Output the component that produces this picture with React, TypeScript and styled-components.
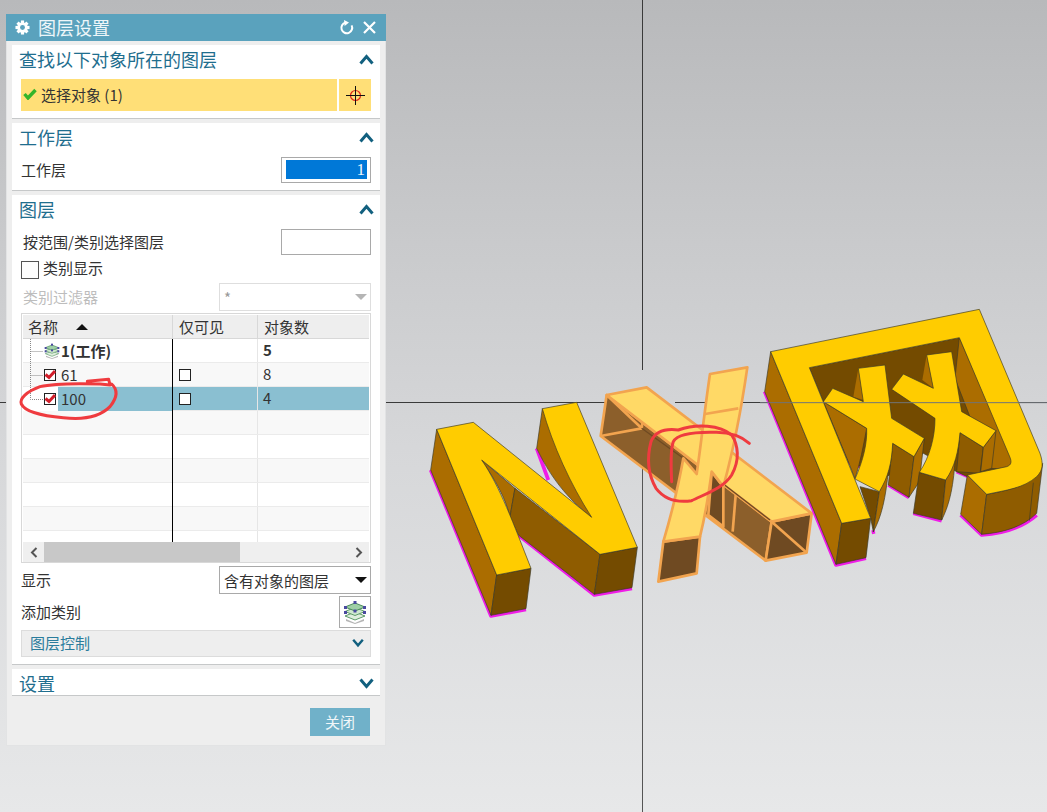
import React from "react";
import styled, { createGlobalStyle } from "styled-components";

const Global = createGlobalStyle`
  html, body { margin: 0; padding: 0; background: #d0d1d3; }
  * { box-sizing: border-box; }
`;

const FONT = `"Noto Sans CJK SC", "Noto Sans", "Liberation Sans", sans-serif`;

const Viewport = styled.div`
  position: relative;
  width: 1047px;
  height: 812px;
  overflow: hidden;
  font-family: ${FONT};
  background: linear-gradient(180deg, #b8b9bb 0%, #c9cacc 30%, #d6d7d9 55%, #e7e8e9 100%);
`;

const Scene = styled.svg`
  position: absolute;
  inset: 0;
  width: 1047px;
  height: 812px;
  display: block;
`;

const Overlay = styled(Scene)`
  pointer-events: none;
  z-index: 3;
`;

const Dialog = styled.div`
  position: absolute;
  left: 6px;
  top: 14px;
  width: 380px;
  height: 732px;
  z-index: 2;
  background: #eeeeee;
  border: 1px solid #e2e3e4;
  border-top: none;
  display: flex;
  flex-direction: column;
`;

const TitleBar = styled.div`
  height: 27px;
  margin: 0 -1px;
  background: #5aa2bd;
  color: #fff;
  display: flex;
  align-items: center;
  padding: 0 10px 0 9px;
  flex-shrink: 0;
`;

const TitleText = styled.span`
  font-size: 18px;
  line-height: 27px;
  margin-left: 8px;
  flex: 1;
  color: #eef6f9;
`;

const TitleIcons = styled.div`
  display: flex;
  align-items: center;
  gap: 9px;
`;

const Cards = styled.div`
  display: flex;
  flex-direction: column;
  gap: 4px;
  padding: 4px 5px 0;
  flex: 1;
`;

const Card = styled.section<{ $h: number }>`
  height: ${(p) => p.$h}px;
  background: #fff;
  border-bottom: 1px solid #c6c8c9;
  padding: 0 9px 0 8px;
  display: flex;
  flex-direction: column;
`;

const SectionHead = styled.div`
  height: 30px;
  display: flex;
  align-items: center;
  justify-content: space-between;
  padding-bottom: 2px;
  margin-right: -3px;
  flex-shrink: 0;
`;

const SectionTitle = styled.h2`
  margin: 0 0 0 -1px;
  font-size: 18px;
  font-weight: 400;
  line-height: 28px;
  color: #1f6e8e;
`;

const Selector = styled.div`
  display: flex;
  gap: 2px;
  height: 32px;
  margin: 4px 0 0 1px;
`;

const SelectorMain = styled.div`
  flex: 1;
  background: #ffdf77;
  display: flex;
  align-items: center;
  gap: 4px;
  padding: 0 0 2px 2px;
  font-size: 15px;
  color: #333;
`;

const SelectorPick = styled.div`
  width: 32px;
  background: #ffdf77;
  display: flex;
  align-items: center;
  justify-content: center;
`;

const FieldRow = styled.div<{ $h: number; $mt?: number; $pl?: number }>`
  height: ${(p) => p.$h}px;
  margin-top: ${(p) => p.$mt ?? 0}px;
  padding-left: ${(p) => p.$pl ?? 1}px;
  display: flex;
  align-items: center;
  justify-content: space-between;
  font-size: 15px;
  color: #333;
  flex-shrink: 0;
`;

const FieldLabel = styled.span<{ $muted?: boolean }>`
  margin-bottom: 2px;
  color: ${(p) => (p.$muted ? "#bdbdbd" : "#333")};
`;

const NumberBox = styled.div`
  width: 90px;
  height: 26px;
  border: 1px solid #a9a9a9;
  padding: 2px 3px 3px 4px;
`;

const NumberFill = styled.div`
  height: 100%;
  background: #0078d7;
  color: #f1f6fb;
  text-align: right;
  padding-right: 2px;
  font: 17px/19px "Liberation Serif", serif;
`;

const EmptyBox = styled.div`
  width: 90px;
  height: 26px;
  border: 1px solid #a9a9a9;
  background: #fff;
`;

const CheckLine = styled.label`
  height: 19px;
  margin-top: 5px;
  display: flex;
  align-items: center;
  gap: 4px;
  font-size: 15px;
  color: #333;
  margin-left: 1px;
`;

const CheckText = styled.span`
  margin-bottom: 4px;
`;

const CheckSquare = styled.span`
  width: 18px;
  height: 18px;
  border: 1px solid #555;
  background: #fff;
`;

const Combo = styled.div<{ $disabled?: boolean }>`
  width: 152px;
  height: 28px;
  border: 1px solid ${(p) => (p.$disabled ? "#dedede" : "#a9a9a9")};
  padding: 0 3px 0 4px;
  display: flex;
  align-items: center;
  justify-content: space-between;
  font-size: 15px;
  color: ${(p) => (p.$disabled ? "#999" : "#333")};
`;

const Table = styled.div`
  height: 250px;
  margin: 2px 0 0 1px;
  border: 1px solid #d8d8d8;
  padding: 1px;
  display: flex;
  flex-direction: column;
  flex-shrink: 0;
`;

const HeadRow = styled.div`
  display: grid;
  grid-template-columns: 150px 85px 1fr;
  height: 24px;
  flex-shrink: 0;
  background: #eeeeee;
  border-bottom: 1px solid #d8d8d8;
  font-size: 15px;
  color: #333;
`;

const HeadCell = styled.div<{ $pl: number; $line?: boolean }>`
  padding-left: ${(p) => p.$pl}px;
  line-height: 23px;
  display: flex;
  align-items: center;
  gap: 18px;
  border-right: ${(p) => (p.$line ? "1px solid #d8d8d8" : "none")};
`;

const Rows = styled.div`
  height: 203px;
  overflow: hidden;
  flex-shrink: 0;
`;

const Row = styled.div<{ $stripe: boolean }>`
  display: grid;
  grid-template-columns: 150px 85px 1fr;
  height: 24px;
  background: ${(p) => (p.$stripe ? "#f8f8f8" : "#fff")};
  border-bottom: 1px solid #ebebeb;
  font-size: 15px;
  color: #333;
`;

const NameCell = styled.div<{ $selected?: boolean }>`
  border-right: 1px solid #000;
  margin-bottom: -1px;
  padding-left: 5px;
  display: flex;
  align-items: center;
  background: ${(p) =>
    p.$selected ? "linear-gradient(90deg, #fff 0, #fff 35px, #8abfd1 35px)" : "none"};
`;

const TreeIcon = styled.span`
  display: flex;
  width: 33px;
  flex-shrink: 0;
  align-items: center;
`;

const CellText = styled.span<{ $bold?: boolean }>`
  font-weight: ${(p) => (p.$bold ? 700 : 400)};
  margin-bottom: 2px;
`;

const MidCell = styled.div<{ $selected?: boolean }>`
  border-right: 1px solid #e6e6e6;
  padding-left: 6px;
  display: flex;
  align-items: center;
  background: ${(p) => (p.$selected ? "#8abfd1" : "none")};
`;

const SmallBox = styled.span`
  width: 12px;
  height: 12px;
  border: 1px solid #222;
  background: #fff;
`;

const CountCell = styled.div<{ $selected?: boolean; $bold?: boolean }>`
  padding: 0 0 2px 5px;
  display: flex;
  align-items: center;
  font-weight: ${(p) => (p.$bold ? 700 : 400)};
  background: ${(p) => (p.$selected ? "#8abfd1" : "none")};
`;

const ScrollBar = styled.div`
  height: 20px;
  background: #efefef;
  display: flex;
  align-items: center;
  flex-shrink: 0;
`;

const ScrollBtn = styled.div`
  width: 21px;
  display: flex;
  justify-content: center;
  flex-shrink: 0;
`;

const ScrollTrack = styled.div`
  flex: 1;
  height: 20px;
`;

const ScrollThumb = styled.div`
  width: 196px;
  height: 100%;
  background: #c8c8c8;
`;

const IconButton = styled.div`
  width: 32px;
  height: 32px;
  border: 1px solid #a9a9a9;
  display: flex;
  align-items: center;
  justify-content: center;
`;

const SubPanel = styled.div`
  height: 27px;
  margin: 2px 0 0 1px;
  background: #eeeeee;
  border: 1px solid #dcdcdc;
  display: flex;
  align-items: center;
  justify-content: space-between;
  padding: 0 6px 2px 8px;
  font-size: 15px;
  color: #2a7c9c;
  flex-shrink: 0;
`;

const Footer = styled.div`
  display: flex;
  justify-content: flex-end;
  padding: 12px 15px 0 0;
  height: 49px;
  flex-shrink: 0;
`;

const CloseButton = styled.button`
  width: 60px;
  height: 28px;
  border: none;
  padding: 0 0 2px;
  background: #70b1c9;
  color: #f2f7f9;
  font-family: ${FONT};
  font-size: 15px;
`;

const Chevron = ({ up, small }: { up?: boolean; small?: boolean }) => {
  const w = small ? 12 : 15;
  const h = small ? 10 : 11;
  return (
    <svg width={w} height={h} viewBox="0 0 15 11">
      <path
        d={up ? "M1.5 9.5 L7.5 2.5 L13.5 9.5" : "M1.5 1.5 L7.5 8.5 L13.5 1.5"}
        fill="none"
        stroke="#12607f"
        strokeWidth="3"
      />
    </svg>
  );
};

const Gear = () => (
  <svg width="15" height="15" viewBox="0 0 16 16">
    <g fill="#fff">
      {[0, 45, 90, 135].map((a) => (
        <rect key={a} x="6.3" y="0.5" width="3.4" height="15" transform={`rotate(${a} 8 8)`} />
      ))}
      <circle cx="8" cy="8" r="5.6" />
    </g>
    <circle cx="8" cy="8" r="2.6" fill="#5aa2bd" />
  </svg>
);

const Refresh = () => (
  <svg width="15" height="15" viewBox="0 0 15 15">
    <path d="M6.5 2.6 A5.4 5.4 0 1 0 12.6 5.4" fill="none" stroke="#fff" strokeWidth="2" />
    <path d="M5 0 L10 2.6 L5.6 6 Z" fill="#fff" />
  </svg>
);

const CloseX = () => (
  <svg width="13" height="13" viewBox="0 0 13 13">
    <path d="M1 1 L12 12 M12 1 L1 12" stroke="#fff" strokeWidth="2.2" />
  </svg>
);

const GreenCheck = () => (
  <svg width="14" height="12" viewBox="0 0 14 12">
    <path d="M1.5 6 L5 10 L12.5 2" fill="none" stroke="#33b52a" strokeWidth="3.4" />
  </svg>
);

const Crosshair = () => (
  <svg width="20" height="20" viewBox="0 0 20 20">
    <circle cx="10.5" cy="10.5" r="5" fill="none" stroke="#e0281a" strokeWidth="1.2" />
    <path d="M1 10.5 H20 M10.5 1 V20" stroke="#111" strokeWidth="1" />
  </svg>
);

const LayerStack = ({ size }: { size: number }) => (
  <svg width={size} height={size} viewBox="0 0 24 24">
    <path d="M3 19 L12 23 L21 19 L21 21 L12 24 L3 21 Z" fill="#b5b5b5" />
    <path d="M2 16 L12 20 L22 16 L12 12 Z" fill="#dfeedd" stroke="#5f9c6a" strokeWidth="1" />
    <path d="M2 11.5 L12 15.5 L22 11.5 L12 7.5 Z" fill="#cfe8cf" stroke="#5f9c6a" strokeWidth="1" />
    <path d="M2 7 L12 11 L22 7 L12 3 Z" fill="#9ecfa6" stroke="#4a8a5a" strokeWidth="1" />
    <g fill="#4a4aa0">
      <rect x="10.5" y="1" width="3" height="3" />
      <rect x="1" y="6" width="3" height="3" />
      <rect x="20" y="6" width="3" height="3" />
      <rect x="1" y="11" width="3" height="3" />
      <rect x="20" y="11" width="3" height="3" />
      <rect x="10.5" y="9.5" width="3" height="3" />
    </g>
  </svg>
);

const TreeLines = ({ last }: { last?: boolean }) => (
  <svg width="16" height="24" viewBox="0 0 16 24">
    <path
      d={last ? "M2.5 0 V12.5 H15" : "M2.5 0 V24 M2.5 12.5 H15"}
      stroke="#888"
      strokeWidth="1"
      strokeDasharray="1 1"
      fill="none"
    />
  </svg>
);

const RedCheck = () => (
  <svg width="12" height="12" viewBox="0 0 12 12">
    <rect x="0.5" y="0.5" width="11" height="11" fill="#fff" stroke="#222" />
    <path d="M1.5 5.5 L5 8.5 L11 2" fill="none" stroke="#d21f2b" strokeWidth="3" />
  </svg>
);

const SmallTri = ({ color = "#111" }: { color?: string }) => (
  <svg width="12" height="6" viewBox="0 0 12 6">
    <path d="M0 0 H12 L6 6 Z" fill={color} />
  </svg>
);

const SortTri = () => (
  <svg width="12" height="6" viewBox="0 0 12 6">
    <path d="M0 6 H12 L6 0 Z" fill="#111" />
  </svg>
);

const ScrollArrow = ({ left }: { left?: boolean }) => (
  <svg width="8" height="11" viewBox="0 0 8 11">
    <path d={left ? "M6.5 1 L2 5.5 L6.5 10" : "M1.5 1 L6 5.5 L1.5 10"} fill="none" stroke="#555" strokeWidth="2" />
  </svg>
);

const Y = "#ffcc00";
const SIDE = "#ab6d00";
const MID = "#8f5c00";
const FRONT = "#744b00";
const EDGE = "#3d3a25";
const PINK = "#f01ce8";
const HI = "#f2a44f";

const CrossLines = () => (
  <g stroke="#3a3a3a" strokeWidth="1" shapeRendering="crispEdges">
    <line x1="642.5" y1="0" x2="642.5" y2="370" />
    <line x1="642.5" y1="433" x2="642.5" y2="812" stroke="#555" />
    <line x1="0" y1="402.5" x2="612" y2="402.5" />
    <line x1="675" y1="402.5" x2="1047" y2="402.5" />
  </g>
);

const LetterN = () => (
  <g transform="translate(420 360) scale(0.33333)" strokeLinejoin="round">
    <path d="M32 330 L213 768 L318 748 M295 525 L523 705 L636 685 M350 265 L385 360" fill="none" stroke={PINK} strokeWidth="11" />
    <path d="M50 208 L32 330 L213 766 L230 645 Z" fill={SIDE} stroke={EDGE} strokeWidth="2" />
    <path d="M230 645 L333 625 L318 746 L213 766 Z" fill={FRONT} stroke={EDGE} strokeWidth="2" />
    <path d="M367 146 L350 265 C 400 370 460 430 515 472 Z" fill={SIDE} stroke={EDGE} strokeWidth="2" />
    <path d="M185 300 C 225 360 255 410 270 470 L285 385 Z" fill={SIDE} stroke={EDGE} strokeWidth="2" />
    <path d="M285 385 L270 470 L295 525 L523 703 L540 583 Z" fill={MID} stroke={EDGE} strokeWidth="2" />
    <path d="M540 583 L652 562 L636 683 L523 703 Z" fill={FRONT} stroke={EDGE} strokeWidth="2" />
    <path
      d="M50 208 L160 187 L515 472 C 450 370 400 260 367 146 L470 127 L652 562 L540 583 L185 300 C 240 380 280 490 333 625 L230 645 Z"
      fill={Y}
      stroke={EDGE}
      strokeWidth="2"
    />
  </g>
);

const LetterX = () => (
  <g transform="translate(590 360) scale(0.33333)" strokeLinejoin="round" stroke={HI} strokeWidth="8">
    <path d="M50 105 L32 228 L527 602 L545 485 Z" fill="#8c5f2b" />
    <path d="M32 228 L155 205" fill="none" />
    <path d="M50 105 L155 205 L170 82" fill="none" />
    <path d="M545 485 L665 460 L650 578 L527 602 Z" fill="#6f4a22" />
    <path d="M545 485 L650 578" fill="none" />
    <path d="M437 405 L428 515" fill="none" />
    <path d="M50 105 L170 82 L665 460 L545 485 Z" fill="#ffd966" />
    <path d="M155 205 L280 295" fill="none" stroke="#6f4a22" strokeWidth="4" />
    <path d="M400 372 L540 480" fill="none" stroke="#6f4a22" strokeWidth="4" />
    <path d="M365 335 L355 465 L400 500 L400 380 Z" fill="#6f4a22" />
    <path d="M220 545 L330 530 L320 640 L205 665 Z" fill="#6f4a22" />
    <path
      d="M360 42 L472 22 C 455 140 430 270 400 380 L365 335 C 355 410 345 470 330 530 L220 545 C 245 460 265 380 280 295 L320 342 C 335 240 345 140 360 42 Z"
      fill="#ffd966"
    />
    <path d="M345 162 L445 145" fill="none" />
  </g>
);

const LetterWang = () => (
  <g transform="translate(760 300) scale(0.33333)" strokeLinejoin="round">
    <path d="M14 275 L228 795 L318 775 M265 485 L300 500 M385 555 L447 592 M590 515 L625 530 M460 640 L545 662 M602 645 L665 705 C 730 700 790 680 830 645 M335 697 L345 695" fill="none" stroke={PINK} strokeWidth="11" />
    {/* inner wall */}
    <path d="M148 203 L598 113 L770 510 L622 530 L590 515 L490 460 L380 530 L265 485 Z" fill={FRONT} stroke={EDGE} strokeWidth="2" />
    <path d="M598 113 L585 235 L690 505 L770 510 Z" fill={SIDE} stroke={EDGE} strokeWidth="2" />
    <path d="M190 305 L320 385 C 310 440 300 490 285 537 L265 485 Z" fill={SIDE} stroke={EDGE} strokeWidth="2" />
    <path d="M295 205 L280 290 L310 300 Z" fill={SIDE} />
    <path d="M500 165 L487 240 L520 265 Z" fill={SIDE} />
    {/* extrusions */}
    <path d="M300 560 L358 575 L340 695 L332 655 Z" fill={FRONT} stroke={EDGE} strokeWidth="2" />
    <path d="M358 575 L385 510 C 378 590 365 650 340 695 Z" fill={SIDE} stroke={EDGE} strokeWidth="2" />
    <path d="M398 430 L462 470 L447 592 L385 555 Z" fill={MID} stroke={EDGE} strokeWidth="2" />
    <path d="M462 470 L493 415 L478 545 L447 592 Z" fill={SIDE} stroke={EDGE} strokeWidth="2" />
    <path d="M600 398 L670 442 L660 520 L590 515 Z" fill={MID} stroke={EDGE} strokeWidth="2" />
    <path d="M670 442 L708 392 L695 505 L662 515 Z" fill={SIDE} stroke={EDGE} strokeWidth="2" />
    <path d="M478 517 L557 540 L545 660 L460 640 Z" fill={FRONT} stroke={EDGE} strokeWidth="2" />
    <path d="M557 540 L585 480 C 580 570 565 620 545 660 Z" fill={SIDE} stroke={EDGE} strokeWidth="2" />
    {/* crossed strokes */}
    <path
      d="M295 205 L375 195 L395 355 L493 415 L462 470 L398 430 C 395 490 385 530 358 575 L285 537 C 310 480 322 430 320 385 L190 305 L218 265 L310 305 Z"
      fill={Y}
      stroke={EDGE}
      strokeWidth="2"
    />
    <path
      d="M500 165 L575 155 L605 335 L708 392 L670 442 L600 398 C 595 455 585 500 557 540 L478 517 C 510 470 525 410 525 355 L395 268 L430 222 L520 265 Z"
      fill={Y}
      stroke={EDGE}
      strokeWidth="2"
    />
    {/* frame */}
    <path d="M32 155 L14 275 L228 793 L245 670 Z" fill={SIDE} stroke={EDGE} strokeWidth="2" />
    <path d="M245 670 L332 655 L318 773 L228 793 Z" fill={FRONT} stroke={EDGE} strokeWidth="2" />
    <path d="M622 525 L680 583 L665 703 L602 643 Z" fill={SIDE} stroke={EDGE} strokeWidth="2" />
    <path d="M680 583 C 760 570 830 545 848 490 L830 640 C 790 680 730 698 665 703 Z" fill={MID} stroke={EDGE} strokeWidth="2" />
    <path d="M820 548 L808 662" stroke={EDGE} strokeWidth="2" />
    <path
      d="M32 155 L658 28 L840 460 C 850 490 850 510 830 530 C 790 565 740 570 680 583 L622 525 L740 500 C 755 495 755 485 750 472 L598 113 L148 203 L332 655 L245 670 Z"
      fill={Y}
      stroke={EDGE}
      strokeWidth="2"
    />
    <line x1="0" y1="308" x2="861" y2="308" stroke="#6f7478" strokeWidth="3" />
  </g>
);

const Ink = () => (
  <g fill="none" stroke="#ef3b3f" strokeLinecap="round" strokeLinejoin="round">
    <g transform="translate(0 250) scale(0.33333)" strokeWidth="9">
      <path d="M262 394 L326 388 L330 405 L300 402 C 240 400 170 398 120 410 C 80 425 58 445 64 462 C 75 485 130 498 190 503 C 250 510 300 500 330 470 C 350 445 355 420 335 402" />
    </g>
    <g transform="translate(590 360) scale(0.33333)" strokeWidth="9">
      <path d="M245 365 C 243 320 240 270 250 245 C 262 222 310 215 380 217 C 425 218 455 230 478 250" />
      <path d="M425 225 C 390 195 320 190 265 210 C 225 205 195 215 183 245 C 170 295 175 345 198 385 C 225 420 265 428 305 422 C 345 402 400 385 425 345 C 450 300 445 255 425 225" />
    </g>
  </g>
);

const rows = [
  { id: "1", name: "1(工作)", count: "5", head: true },
  { id: "61", name: "61", count: "8" },
  { id: "100", name: "100", count: "4", selected: true, last: true },
  { id: "a", name: "", count: "" },
  { id: "b", name: "", count: "" },
  { id: "c", name: "", count: "" },
  { id: "d", name: "", count: "" },
  { id: "e", name: "", count: "" },
  { id: "f", name: "", count: "" },
];

export default function App() {
  return (
    <Viewport>
      <Global />
      <Scene viewBox="0 0 1047 812">
        <CrossLines />
        <LetterN />
        <LetterX />
        <LetterWang />
      </Scene>
      <Dialog>
        <TitleBar>
          <Gear />
          <TitleText>图层设置</TitleText>
          <TitleIcons>
            <Refresh />
            <CloseX />
          </TitleIcons>
        </TitleBar>
        <Cards>
          <Card $h={74}>
            <SectionHead>
              <SectionTitle>查找以下对象所在的图层</SectionTitle>
              <Chevron up />
            </SectionHead>
            <Selector>
              <SelectorMain>
                <GreenCheck />
                选择对象 (1)
              </SelectorMain>
              <SelectorPick>
                <Crosshair />
              </SelectorPick>
            </Selector>
          </Card>
          <Card $h={68}>
            <SectionHead>
              <SectionTitle>工作层</SectionTitle>
              <Chevron up />
            </SectionHead>
            <FieldRow $h={26} $mt={4}>
              <FieldLabel>工作层</FieldLabel>
              <NumberBox>
                <NumberFill>1</NumberFill>
              </NumberBox>
            </FieldRow>
          </Card>
          <Card $h={470}>
            <SectionHead>
              <SectionTitle>图层</SectionTitle>
              <Chevron up />
            </SectionHead>
            <FieldRow $h={26} $mt={4} $pl={3}>
              <FieldLabel>按范围/类别选择图层</FieldLabel>
              <EmptyBox />
            </FieldRow>
            <CheckLine>
              <CheckSquare />
              <CheckText>类别显示</CheckText>
            </CheckLine>
            <FieldRow $h={28} $mt={4} $pl={3}>
              <FieldLabel $muted>类别过滤器</FieldLabel>
              <Combo $disabled>
                *
                <SmallTri color="#b5b5b5" />
              </Combo>
            </FieldRow>
            <Table>
              <HeadRow>
                <HeadCell $pl={5} $line>
                  名称
                  <SortTri />
                </HeadCell>
                <HeadCell $pl={6} $line>
                  仅可见
                </HeadCell>
                <HeadCell $pl={6}>对象数</HeadCell>
              </HeadRow>
              <Rows>
                {rows.map((r, i) => (
                  <Row key={r.id} $stripe={i % 2 === 1}>
                    <NameCell $selected={r.selected}>
                      {r.name && (
                        <TreeIcon>
                          <TreeLines last={r.last} />
                          {r.head ? <LayerStack size={16} /> : <RedCheck />}
                        </TreeIcon>
                      )}
                      {r.name && <CellText $bold={r.head}>{r.name}</CellText>}
                    </NameCell>
                    <MidCell $selected={r.selected}>
                      {r.name && !r.head && <SmallBox />}
                    </MidCell>
                    <CountCell $selected={r.selected} $bold={r.head}>
                      {r.count}
                    </CountCell>
                  </Row>
                ))}
              </Rows>
              <ScrollBar>
                <ScrollBtn>
                  <ScrollArrow left />
                </ScrollBtn>
                <ScrollTrack>
                  <ScrollThumb />
                </ScrollTrack>
                <ScrollBtn>
                  <ScrollArrow />
                </ScrollBtn>
              </ScrollBar>
            </Table>
            <FieldRow $h={28} $mt={3}>
              <FieldLabel>显示</FieldLabel>
              <Combo>
                含有对象的图层
                <SmallTri />
              </Combo>
            </FieldRow>
            <FieldRow $h={32} $mt={2}>
              <FieldLabel>添加类别</FieldLabel>
              <IconButton>
                <LayerStack size={24} />
              </IconButton>
            </FieldRow>
            <SubPanel>
              图层控制
              <Chevron small />
            </SubPanel>
          </Card>
          <Card $h={27}>
            <SectionHead>
              <SectionTitle>设置</SectionTitle>
              <Chevron />
            </SectionHead>
          </Card>
        </Cards>
        <Footer>
          <CloseButton>关闭</CloseButton>
        </Footer>
      </Dialog>
      <Overlay viewBox="0 0 1047 812">
        <Ink />
      </Overlay>
    </Viewport>
  );
}
